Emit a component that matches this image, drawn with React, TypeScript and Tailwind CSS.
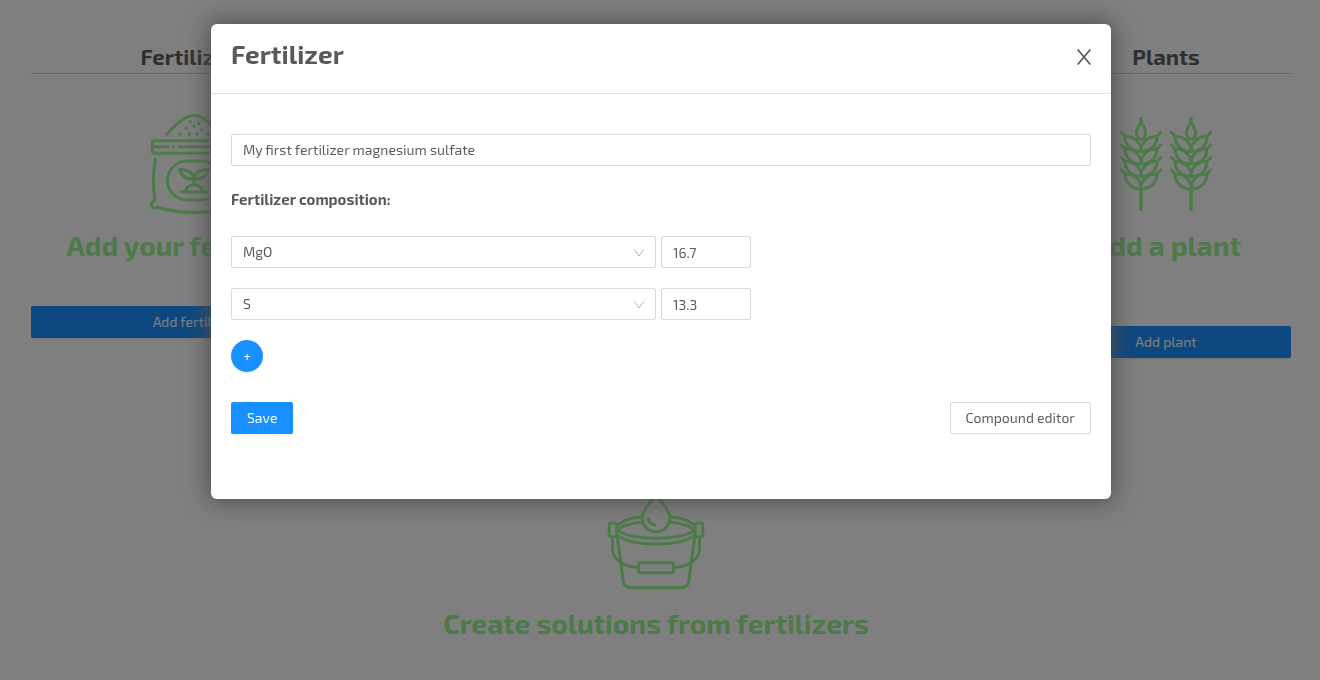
import { useState } from "react";
import type { ReactNode } from "react";

const strokeProps = {
  fill: "none",
  stroke: "currentColor",
  strokeWidth: 3,
  strokeLinecap: "round",
  strokeLinejoin: "round",
} as const;

const GRAINS = [
  [40.7, 8.7], [48.7, 10.3], [44, 13.3], [36.3, 15], [51.7, 16.7],
  [30, 21.3], [39.3, 21.3], [47, 21.3], [58, 21.3],
];

function SackIcon() {
  return (
    <svg viewBox="0 0 88 102" className="h-[102px] w-[88px]" aria-hidden="true" {...strokeProps}>
      <path d="M16.5 21.5C28 9 36 2.5 44 2.5S60 9 71.5 21.5" />
      {GRAINS.map(([x, y]) => (
        <circle key={`${x}-${y}`} cx={x} cy={y} r="1.7" fill="currentColor" stroke="none" />
      ))}
      <path d="M18 33.7H5q-3 0-3-3t3-3H83q3 0 3 3t-3 3H29.5M5 33.7q-3 0-3 3.3t3 3.3H83q3 0 3-3.3t-3-3.3M23.4 33.7h.1" />
      <path d="M5.3 46.3C3 60 3 74 4.900 86.500C2 89 1 91.500 2 93.500q1.500 2.500 5 .8C20 98 32 99.500 44 99.500S68 98 81 94.300q3.500 1.700 5-.8c1-2 0-4.500-2.900-7C85 74 85 60 82.700 46.300" />
      <rect x="17.500" y="48" width="53" height="39" rx="19.500" />
      <path d="M44 71.500V65.500C43 58 37 56.500 29.500 56.500C32 64 37 67 44 65.500C51 67 56 64 58.500 56.500C51 56.500 45 58 44 65.500" />
      <path d="M35.500 78.500C37 69.500 51 69.500 52.500 78.500M31 79H57" />
    </svg>
  );
}

function WheatEar() {
  return (
    <g>
      <path d="M21 0V6M21 71V94" strokeLinecap="butt" strokeWidth="3.500" />
      <path d="M21 5.500C17 10 16.500 13.500 16.500 17Q17 22 21 22T25.500 17C25.500 13.500 25 10 21 5.500Z" />
      {[19.5, 32, 44.5, 57].map((y) => (
        <g key={y} transform={`translate(0 ${y})`}>
          <path strokeLinecap="butt" d="M.5-5L5-.3C5 9 12 15 21 15C30 15 37 9 37-.3L41.500-5" />
          <path d="M5 0C14-.5 21 6 21 14C21 6 28-.5 37 0" />
        </g>
      ))}
    </g>
  );
}

function WheatIcon() {
  return (
    <svg viewBox="0 0 92 94" className="h-[94px] w-[92px]" aria-hidden="true" {...strokeProps}>
      <WheatEar />
      <g transform="translate(50 0)">
        <WheatEar />
      </g>
    </svg>
  );
}

function BucketIcon() {
  return (
    <svg viewBox="0 0 98 101" className="mb-[3px] h-[101px] w-[98px]" aria-hidden="true" {...strokeProps}>
      <path d="M49 5.500C44 13 35 21 35 28.700a14 14 0 0 0 28 0C63 21 54 13 49 5.500Z" />
      <path d="M41 28.300q.5 7.500 8 8" strokeLinecap="butt" />
      <path d="M10.500 37C14 32 24 29 34 28M87.500 37C84 32 74 29 64 28" />
      <path d="M34 33.300C25 34 15 37 10.500 41C22 52 76 52 87.500 41C83 37 73 34 64 33.300" />
      <path d="M10.500 46C22 58 76 58 87.500 46" />
      <rect x="2.200" y="34.300" width="7.500" height="13.400" rx="1.500" />
      <rect x="88.300" y="34.300" width="7.500" height="13.400" rx="1.500" />
      <path d="M10.300 47.700L16 91Q17 98.700 24.500 98.700H73.500Q81 98.700 82 91L87.700 47.700" />
      <path d="M5.500 48.500V60C6 71 17 78.300 31.500 78.300M92.500 48.500V60C92 71 81 78.300 66.500 78.300" />
      <rect x="31.700" y="73.700" width="34.600" height="10" rx="1.500" />
    </svg>
  );
}

function Column({ title, children }: { title: string; children: ReactNode }) {
  return (
    <section className="flex min-w-0 flex-col">
      <h2 className="h-[30px] border-b border-black/20 text-center text-[22px] leading-6 font-bold text-black/65">
        {title}
      </h2>
      {children}
    </section>
  );
}

function Callout({ icon, text }: { icon: ReactNode; text: string }) {
  return (
    <div className="flex flex-col items-center text-[#9af492]">
      <div className="flex min-h-[102px] items-center">{icon}</div>
      <p className="mt-[10px] text-center text-[28px] leading-10 font-bold whitespace-nowrap">{text}</p>
    </div>
  );
}

const primary = "h-8 rounded-xs bg-[#1890ff] text-sm text-white shadow-[0_2px_0_rgba(0,0,0,0.045)]";
const field = "h-8 rounded-xs border border-[#d9d9d9] bg-white px-[11px] text-sm text-black/65 outline-none";

type Component = { element: string; percent: string };

export default function App() {
  const [name, setName] = useState("My first fertilizer magnesium sulfate");
  const [parts, setParts] = useState<Component[]>([
    { element: "MgO", percent: "16.7" },
    { element: "S", percent: "13.3" },
  ]);
  const update = (i: number, change: Partial<Component>) =>
    setParts(parts.map((p, n) => (n === i ? { ...p, ...change } : p)));

  return (
    <div className="min-h-screen bg-white font-['Exo_2','Open_Sans',sans-serif]">
      <main className="grid grid-cols-[326fr_684fr_250fr] pt-11 pr-[29px] pl-[31px]">
        <Column title="Fertilizers">
          <div className="mt-[39px]">
            <Callout icon={<SackIcon />} text="Add your fertilizers" />
          </div>
          <button className={`${primary} mt-[41px]`}>Add fertilizer</button>
        </Column>
        <Column title="Solutions">
          <div className="mt-[415px] pr-[86px]">
            <Callout icon={<BucketIcon />} text="Create solutions from fertilizers" />
          </div>
        </Column>
        <Column title="Plants">
          <div className="mt-[39px]">
            <Callout icon={<WheatIcon />} text="Add a plant" />
          </div>
          <button className={`${primary} mt-[61px]`}>Add plant</button>
        </Column>
      </main>

      <div className="fixed inset-0 flex items-start justify-center overflow-hidden bg-black/50 pt-6 pr-[29px] pl-[31px]">
        <div
          role="dialog"
          aria-modal="true"
          aria-labelledby="dialog-title"
          className="w-full max-w-[900px] rounded-md bg-white pb-[65px] text-black/65 shadow-[0_0_25px_2px_#4c4c4c]"
        >
          <header className="flex items-center justify-between border-b border-[#dee2e6] px-5 pt-[10px] pb-[19px]">
            <h1 id="dialog-title" className="text-[26px] leading-10 font-bold">Fertilizer</h1>
            <button aria-label="Close" className="pt-1.5">
              <svg viewBox="0 0 14 16" className="h-4 w-3.5" fill="none" stroke="currentColor" strokeWidth="1.700">
                <path d="M.7.5L13.300 15.500M13.300.5L.7 15.500" />
              </svg>
            </button>
          </header>

          <form className="flex flex-col px-5 pt-10" onSubmit={(e) => e.preventDefault()}>
            <input
              aria-label="Fertilizer name"
              className={`${field} w-full pb-0.5`}
              value={name}
              onChange={(e) => setName(e.target.value)}
            />
            <h2 className="mt-[22px] text-[15px] leading-[22px] font-bold">Fertilizer composition:</h2>

            <div className="mt-[26px] flex flex-col gap-5">
              {parts.map((part, i) => (
                <div key={i} className="flex gap-[5px]">
                  <div className="relative w-full max-w-[425px]">
                    <select
                      aria-label={`Element ${i + 1}`}
                      className={`${field} w-full appearance-none`}
                      value={part.element}
                      onChange={(e) => update(i, { element: e.target.value })}
                    >
                      <option>MgO</option>
                      <option>S</option>
                    </select>
                    <svg
                      viewBox="0 0 10 8"
                      className="pointer-events-none absolute top-[13px] right-3 h-2 w-2.5 text-black/30"
                      fill="none"
                      stroke="currentColor"
                      aria-hidden="true"
                    >
                      <path d="M.4.5L5 7L9.600.5" />
                    </svg>
                  </div>
                  <input
                    aria-label={`Percent ${i + 1}`}
                    className={`${field} w-[90px]`}
                    value={part.percent}
                    onChange={(e) => update(i, { percent: e.target.value })}
                  />
                </div>
              ))}
            </div>

            <button
              type="button"
              aria-label="Add element"
              className="mt-5 flex size-8 items-center justify-center rounded-full bg-[#1890ff] text-sm text-white shadow-[0_2px_0_rgba(0,0,0,0.045)]"
              onClick={() => setParts([...parts, { element: "S", percent: "" }])}
            >
              +
            </button>

            <div className="mt-[30px] flex justify-between">
              <button type="submit" className={`${primary} px-4`}>Save</button>
              <button type="button" className="h-8 rounded-xs border border-[#d9d9d9] px-[15px] text-sm">
                Compound editor
              </button>
            </div>
          </form>
        </div>
      </div>
    </div>
  );
}
